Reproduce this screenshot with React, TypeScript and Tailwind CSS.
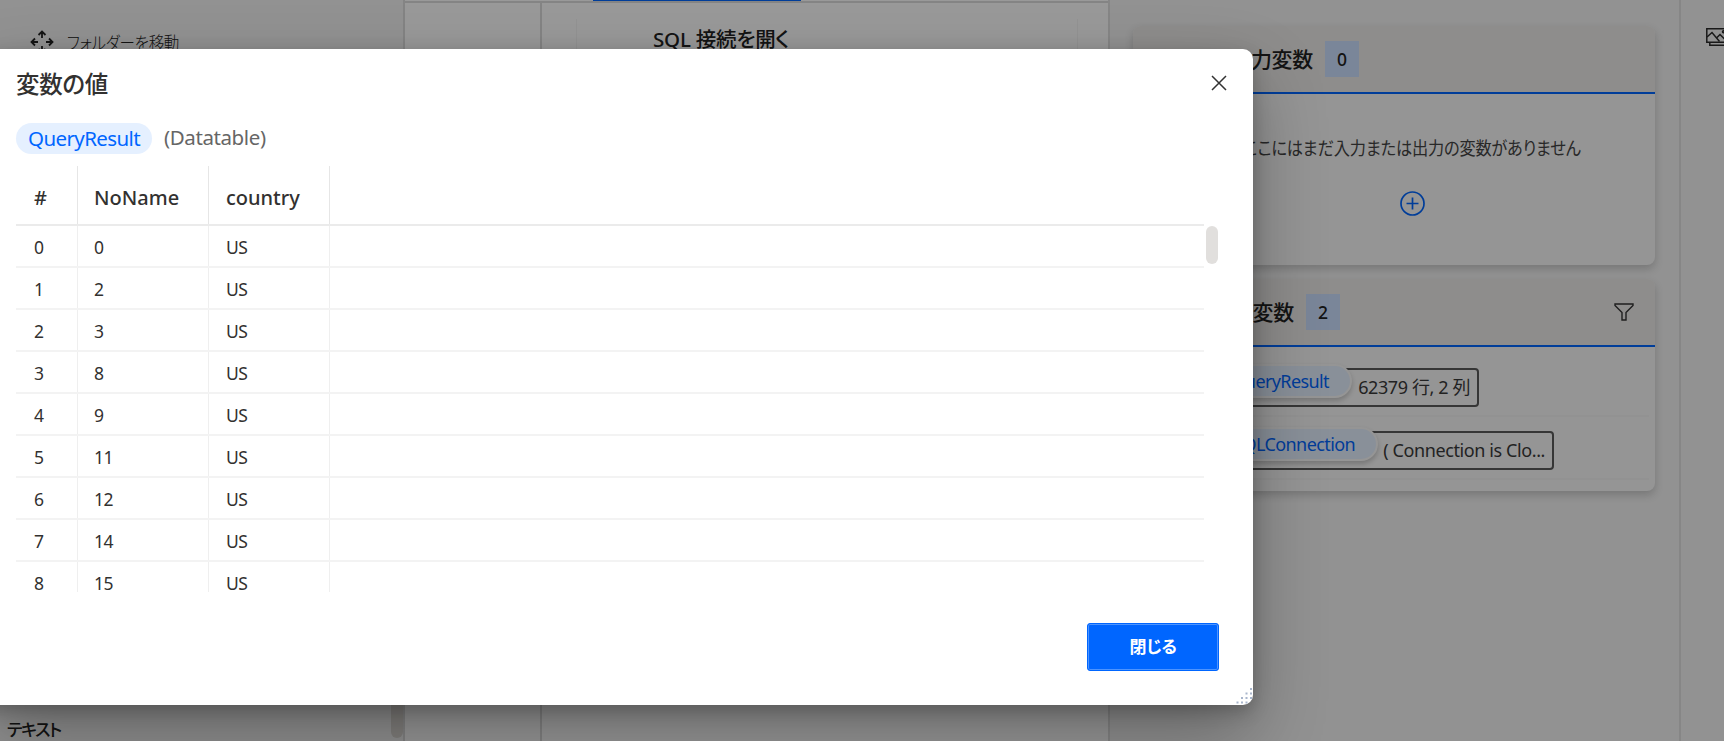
import { type ReactNode } from "react";

const rows = [0, 2, 3, 8, 9, 11, 12, 14, 15].map((value, index) => ({
  index,
  value,
  country: "US",
}));

function MoveIcon() {
  return (
    <svg width="24" height="24" viewBox="0 0 24 24" fill="none" stroke="#222" strokeWidth="1.8">
      <path d="M12 8V2M8.500 5 12 1.500 15.500 5M12 16v6M8.500 19l3.500 3.500 3.500-3.500M8 12H2M5 8.500 1.500 12 5 15.500M16 12h6M19 8.500l3.500 3.500-3.500 3.500" />
    </svg>
  );
}

function ImagesIcon() {
  return (
    <svg width="28" height="20" viewBox="0 0 28 20" fill="none" stroke="#2a2a2a" strokeWidth="1.500" className="shrink-0">
      <path d="M.8.8h23v13.500H.8zM3.800 14.500v2.700h23V4" />
      <path d="m1 9 5-4.500 7.500 9M10.500 10l3.500-3.500 7 7" />
      <circle cx="17.500" cy="3.800" r="1" />
    </svg>
  );
}

function FilterIcon() {
  return (
    <svg width="20" height="18" viewBox="0 0 20 18" fill="none" stroke="#333" strokeWidth="1.4">
      <path d="M1 1h18v1.500l-7 7V17H8V9.500l-7-7z" />
    </svg>
  );
}

function PlusCircleIcon() {
  return (
    <svg width="25" height="25" viewBox="0 0 25 25" fill="none" stroke="#0066ff" strokeWidth="1.7">
      <circle cx="12.500" cy="12.500" r="11.500" />
      <path d="M12.500 6.500v12M6.500 12.500h12" />
    </svg>
  );
}

function ResizeGrip() {
  return (
    <svg width="18" height="18" viewBox="0 0 18 18" fill="#a9b6cc" className="absolute right-0 bottom-0">
      {[
        [15, 1],
        [10.5, 5.5],
        [15, 5.5],
        [6, 10],
        [10.5, 10],
        [15, 10],
        [1.5, 14.5],
        [6, 14.5],
        [10.5, 14.5],
      ].map(([x, y]) => (
        <rect key={`${x}-${y}`} x={x} y={y} width="2" height="2" />
      ))}
    </svg>
  );
}

function PanelHeader({ title, count, action }: { title: string; count: number; action?: ReactNode }) {
  return (
    <div className="flex h-[68px] items-center rounded-t-lg border-b-2 border-[#0066ff] bg-[#edebe9] pr-[21px]">
      <h2 className="pt-0.5 text-[21px] font-medium tracking-[-0.3px] text-[#222]">{title}</h2>
      <span className="ml-3 flex h-9 w-[34px] items-center justify-center bg-[#cce0ff] text-[17.500px] font-medium text-[#222]">
        {count}
      </span>
      <div className="ml-auto">{action}</div>
    </div>
  );
}

function VariableRow({ name, pillWidth, value, boxWidth }: { name: string; pillWidth: string; value: string; boxWidth: string }) {
  return (
    <div className="relative mr-1.5 flex h-[63px] items-start border-b-2 border-[#f3f3f3] pt-3.5">
      <div className={`flex h-[39px] items-center justify-end rounded-[4px] border-2 border-[#5a5a5a] pr-[7px] text-[18px] tracking-[-0.4px] text-[#3a3a3a] ${boxWidth}`}>
        {value}
      </div>
      <div className={`absolute top-2.5 left-0 flex h-[34px] items-center justify-end rounded-full border-2 border-[#f8f8f8] bg-[#e5f0ff] pr-[21px] text-[18px] tracking-[-0.6px] text-[#0066ff] shadow-[0_3px_5px_rgba(0,0,0,0.2)] ${pillWidth}`}>
        {name}
      </div>
    </div>
  );
}

function Workspace() {
  return (
    <div className="flex h-full w-full bg-[#f3f3f3]">
      <aside className="flex w-[405px] shrink-0 flex-col justify-between border-r-2 border-[#dcdcdc]">
        <div className="flex items-center gap-[13px] pt-[29px] pl-[30px]">
          <MoveIcon />
          <span className="origin-left scale-x-[0.86] pt-0.5 text-[18px] leading-6 font-light tracking-[-0.3px] text-[#222]">フォルダーを移動</span>
        </div>
        <div className="flex h-9 justify-between pl-[7px]">
          <span className="pt-[13px] text-[17px] leading-6 font-medium tracking-[-1.400px] text-[#222]">テキスト</span>
          <span className="h-[33px] w-[12px] rounded-b-full bg-[#dad7d2]" />
        </div>
      </aside>

      <main className="flex w-[703px] shrink-0 flex-col bg-white">
        <div className="h-[3px] shrink-0 border-b-2 border-[#dcdcdc]">
          <div className="ml-[188px] h-px w-[208px] bg-[#0066ff]" />
        </div>
        <div className="flex grow">
          <div className="w-[137px] border-r-2 border-[#dcdcdc]" />
          <div className="mt-4 ml-[34px] h-14 w-[502px] border-x border-[#f6f6f6] pt-1.5 pl-[76px]">
            <h3 className="text-[20.500px] leading-7 font-medium tracking-[-0.2px] text-[#222]">SQL 接続を開く</h3>
          </div>
        </div>
      </main>

      <aside className="flex w-[573px] shrink-0 flex-col gap-3.5 border-x-2 border-[#e0e0e0] pt-[26px] pr-6 pl-[23px]">
        <section className="h-[239px] rounded-lg bg-[#f8f8f8] shadow-[0_4px_8px_rgba(0,0,0,0.18)] [&_h2]:w-[180px] [&_h2]:text-right">
          <PanelHeader title="入出力変数" count={0} />
          <div className="flex flex-col items-center gap-[29px] pt-10 pl-[37px]">
            <p className="scale-x-[0.9] text-[18px] leading-7 tracking-[-0.2px] whitespace-nowrap text-[#444]">ここにはまだ入力または出力の変数がありません</p>
            <PlusCircleIcon />
          </div>
        </section>
        <section className="h-[212px] rounded-lg bg-[#f8f8f8] shadow-[0_4px_8px_rgba(0,0,0,0.18)] [&_h2]:w-[161px] [&_h2]:text-right">
          <PanelHeader title="フロー変数" count={2} action={<FilterIcon />} />
          <div className="flex flex-col pt-[7px] pl-10">
            <VariableRow name="QueryResult" pillWidth="w-[179px]" value="62379 行, 2 列" boxWidth="w-[306px]" />
            <VariableRow name="SQLConnection" pillWidth="w-[205px]" value="( Connection is Clo..." boxWidth="w-[381px]" />
          </div>
        </section>
      </aside>

      <aside className="grow overflow-hidden pt-7 pl-[25px]">
        <ImagesIcon />
      </aside>
    </div>
  );
}

function ValueTable() {
  return (
    <div className="mt-3 flex h-[426px] w-[1202px] flex-col overflow-hidden text-[#323130]">
      <div className="flex h-[60px] w-[1188px] shrink-0 border-b-2 border-[#ebebeb] text-[20px] font-medium [&>div]:pt-1.5">
        <div className="flex w-[62px] items-center border-r border-[#e6e6e6] pl-[18px]">#</div>
        <div className="flex w-[131px] items-center border-r border-[#e6e6e6] pl-4">NoName</div>
        <div className="flex w-[121px] items-center border-r border-[#e6e6e6] pl-[17px]">country</div>
      </div>
      <div className="flex gap-0.5">
        <div className="w-[1188px]">
          {rows.map((row) => (
            <div
              key={row.index}
              className="flex h-[42px] border-b-2 border-[#f3f3f3] text-[17.500px] leading-[15px] tracking-[-0.5px] last:h-[30px] last:border-b-0"
            >
              <div className="flex w-[62px] items-start border-r border-[#efefef] pt-3.5 pl-[18px]">{row.index}</div>
              <div className="flex w-[131px] items-start border-r border-[#efefef] pt-3.5 pl-4">{row.value}</div>
              <div className="flex w-[121px] items-start border-r border-[#efefef] pt-3.5 pl-[17px]">{row.country}</div>
            </div>
          ))}
        </div>
        <div className="h-[38px] w-3 rounded-full bg-[#e1dfdd]" />
      </div>
    </div>
  );
}

function VariableValueDialog() {
  return (
    <div
      role="dialog"
      aria-label="変数の値"
      className="absolute top-[49px] -left-4 flex h-[656px] w-[1269px] flex-col rounded-[10px] bg-white pl-8 shadow-[0_32px_72px_rgba(0,0,0,0.3),0_6px_18px_rgba(0,0,0,0.22)]"
    >
      <div className="flex items-start justify-between pt-[19px] pr-[26px]">
        <h1 className="text-[23.500px] leading-8 font-medium tracking-[-0.3px] text-[#323130]">変数の値</h1>
        <button type="button" aria-label="閉じる" className="mt-[7px]">
          <svg width="16" height="16" viewBox="0 0 16 16" fill="none" stroke="#333" strokeWidth="1.500">
            <path d="m1 1 14 14M15 1 1 15" />
          </svg>
        </button>
      </div>
      <div className="mt-[23px] flex h-[31px] items-center">
        <span className="flex h-[31px] w-[136px] items-center justify-center rounded-full bg-[#e5f0ff] text-[20.500px] tracking-[-0.6px] text-[#0066ff]">
          QueryResult
        </span>
        <span className="mb-1 ml-3 text-[20.500px] leading-7 tracking-[-0.4px] text-[#666]">(Datatable)</span>
      </div>
      <ValueTable />
      <button
        type="button"
        className="mt-[31px] mr-[34px] flex h-12 w-[132px] items-center justify-center self-end rounded-[3px] border border-[#0066ff] bg-[#0066ff] text-[17px] font-bold tracking-[-0.4px] text-white shadow-[inset_0_0_0_1px_#4d94ff]"
      >
        閉じる
      </button>
      <ResizeGrip />
    </div>
  );
}

export default function App() {
  return (
    <div className="relative h-[741px] w-[1724px] overflow-hidden font-['Noto_Sans','Noto_Sans_CJK_JP',sans-serif] [font-feature-settings:'palt']">
      <Workspace />
      <div className="absolute inset-0 bg-black/40" />
      <VariableValueDialog />
    </div>
  );
}
